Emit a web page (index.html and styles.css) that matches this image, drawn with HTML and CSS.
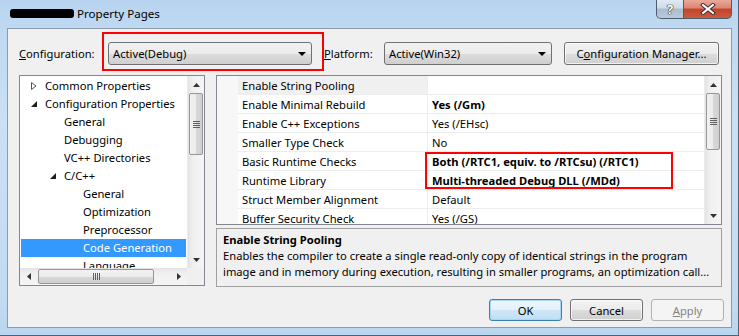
FILE: index.html
```html
<!DOCTYPE html>
<html>
<head>
<meta charset="utf-8">
<title>Property Pages</title>
<link rel="stylesheet" href="styles.css">
</head>
<body>
<div class="window">
  <div class="titlebar">
    <span class="redact"></span><span class="title">Property Pages</span>
    <div class="caption">
      <div class="cap help">?</div>
      <div class="cap close">
        <svg width="16" height="12" viewBox="0 0 16 12"><path d="M3 2 L13 10 M13 2 L3 10" stroke="#3a2a2a" stroke-width="4" stroke-linecap="square"/><path d="M3 2 L13 10 M13 2 L3 10" stroke="#fff" stroke-width="2" stroke-linecap="square"/></svg>
      </div>
    </div>
  </div>
  <div class="client">
    <div class="toprow">
      <span class="lbl lbl-cfg"><u>C</u>onfiguration:</span>
      <div class="combo combo-cfg"><span>Active(Debug)</span><i class="drop"></i></div>
      <span class="lbl lbl-plat"><u>P</u>latform:</span>
      <div class="combo combo-plat"><span>Active(Win32)</span><i class="drop"></i></div>
      <div class="btn btn-mgr">C<u>o</u>nfiguration Manager...</div>
    </div>
    <div class="main">
      <div class="tree">
        <div class="tree-list">
          <div class="node d0"><span class="exp"><svg width="6" height="8" viewBox="0 0 6 8"><path d="M0.5 0.5 L5 4 L0.5 7.5 Z" fill="#fff" stroke="#555" stroke-width="1"/></svg></span>Common Properties</div>
          <div class="node d0"><span class="exp"><svg width="6" height="6" viewBox="0 0 6 6"><path d="M6 0 L6 6 L0 6 Z" fill="#1e1e1e"/></svg></span>Configuration Properties</div>
          <div class="node d1"><span class="exp"></span>General</div>
          <div class="node d1"><span class="exp"></span>Debugging</div>
          <div class="node d1"><span class="exp"></span>VC++ Directories</div>
          <div class="node d1"><span class="exp"><svg width="6" height="6" viewBox="0 0 6 6"><path d="M6 0 L6 6 L0 6 Z" fill="#1e1e1e"/></svg></span>C/C++</div>
          <div class="node d2"><span class="exp"></span>General</div>
          <div class="node d2"><span class="exp"></span>Optimization</div>
          <div class="node d2"><span class="exp"></span>Preprocessor</div>
          <div class="node d2 sel"><span class="exp"></span>Code Generation</div>
          <div class="node d2"><span class="exp"></span>Language</div>
        </div>
        <div class="vscroll">
          <div class="arr"><svg width="7" height="4" viewBox="0 0 7 4"><path d="M0 4 L3.5 0 L7 4 Z" fill="#333"/></svg></div>
          <div class="track"><div class="thumb v t-tree"><i class="grip-v"></i></div></div>
          <div class="arr"><svg width="7" height="4" viewBox="0 0 7 4"><path d="M0 0 L3.5 4 L7 0 Z" fill="#333"/></svg></div>
        </div>
        <div class="hscroll">
          <div class="arr"><svg width="4" height="7" viewBox="0 0 4 7"><path d="M4 0 L0 3.5 L4 7 Z" fill="#333"/></svg></div>
          <div class="track h"><div class="thumb hz"><i class="grip-h"></i></div></div>
          <div class="arr"><svg width="4" height="7" viewBox="0 0 4 7"><path d="M0 0 L4 3.5 L0 7 Z" fill="#333"/></svg></div>
        </div>
        <div class="corner"></div>
      </div>
      <div class="right">
        <div class="grid">
          <div class="rows">
            <div class="row first"><span class="gut"></span><span class="name">Enable String Pooling</span><span class="val"></span></div>
            <div class="row"><span class="gut"></span><span class="name">Enable Minimal Rebuild</span><span class="val b">Yes (/Gm)</span></div>
            <div class="row"><span class="gut"></span><span class="name">Enable C++ Exceptions</span><span class="val">Yes (/EHsc)</span></div>
            <div class="row"><span class="gut"></span><span class="name">Smaller Type Check</span><span class="val">No</span></div>
            <div class="row"><span class="gut"></span><span class="name">Basic Runtime Checks</span><span class="val b">Both (/RTC1, equiv. to /RTCsu) (/RTC1)</span></div>
            <div class="row"><span class="gut"></span><span class="name">Runtime Library</span><span class="val b">Multi-threaded Debug DLL (/MDd)</span></div>
            <div class="row"><span class="gut"></span><span class="name">Struct Member Alignment</span><span class="val">Default</span></div>
            <div class="row"><span class="gut"></span><span class="name">Buffer Security Check</span><span class="val">Yes (/GS)</span></div>
          </div>
          <div class="vscroll">
            <div class="arr"><svg width="7" height="4" viewBox="0 0 7 4"><path d="M0 4 L3.5 0 L7 4 Z" fill="#333"/></svg></div>
            <div class="track"><div class="thumb v t-grid"><i class="grip-v"></i></div></div>
            <div class="arr"><svg width="7" height="4" viewBox="0 0 7 4"><path d="M0 0 L3.5 4 L7 0 Z" fill="#333"/></svg></div>
          </div>
        </div>
        <div class="desc">
          <div class="desc-title">Enable String Pooling</div>
          <div class="desc-line">Enables the compiler to create a single read-only copy of identical strings in the program</div>
          <div class="desc-line">image and in memory during execution, resulting in smaller programs, an optimization call...</div>
        </div>
      </div>
    </div>
    <div class="buttons">
      <div class="btn btn-dlg default">OK</div>
      <div class="btn btn-dlg">Cancel</div>
      <div class="btn btn-dlg disabled"><u>A</u>pply</div>
    </div>
  </div>
</div>
<div class="mark mark-cfg"></div>
<div class="mark mark-rt"></div>
</body>
</html>
```

FILE: styles.css
```css
* { box-sizing: border-box; margin: 0; padding: 0; }
html, body { width: 739px; height: 336px; overflow: hidden; }
body {
  position: relative;
  font-family: "Noto Sans", "Segoe UI", sans-serif;
  font-size: 11.2px;
  color: #000;
  background: #fff;
}
u { text-decoration: underline; text-underline-offset: 1px; }

.window {
  width: 739px;
  height: 336px;
  display: flex;
  flex-direction: column;
  background: linear-gradient(180deg, #b7d3ef 0, #bfd9f2 28px, #c9e0f5 120px, #c3dbf2 300px, #b9d4ee 336px);
  border-right: 1px solid #4f6275;
  border-bottom: 1px solid #4f6275;
}

/* title bar */
.titlebar {
  height: 28px;
  flex: none;
  display: flex;
  align-items: flex-start;
  padding-left: 10px;
}
.redact {
  width: 64px;
  height: 9px;
  margin-top: 9px;
  background: #000;
  border-radius: 3px;
}
.title {
  margin-left: 3px;
  line-height: 28px;
  font-size: 11.6px;
  color: #000;
}
.caption {
  margin-left: auto;
  margin-right: 6px;
  display: flex;
  height: 19px;
}
.cap {
  height: 19px;
  border: 1px solid #4d5d70;
  border-top: none;
  display: flex;
  align-items: center;
  justify-content: center;
}
.help {
  width: 28px;
  border-radius: 0 0 0 5px;
  background: linear-gradient(180deg, #e1eaf3 0, #cfdbe8 45%, #aabccf 50%, #b9cadb 100%);
  color: #fff;
  font-weight: bold;
  font-size: 13px;
  text-shadow: 0 0 1px #222, 0 0 1px #222, 0 0 1px #222;
}
.close {
  width: 48px;
  border-left: none;
  border-radius: 0 0 5px 0;
  background: linear-gradient(180deg, #e9a99a 0, #d98670 45%, #c2432c 50%, #cc5b3f 100%);
}

/* client */
.client {
  margin-left: 7px;
  width: 725px;
  height: 300px;
  flex: none;
  background: #f0f0f0;
  border: 1px solid #8e9bab;
  display: flex;
  flex-direction: column;
}
.toprow {
  display: flex;
  align-items: center;
  margin-top: 13px;
  height: 23px;
  padding-left: 11px;
}
.lbl-cfg { width: 89px; }
.lbl-plat { width: 60px; margin-left: 12px; }
.combo {
  height: 23px;
  display: flex;
  align-items: center;
  padding-left: 4px;
  border: 1px solid #707070;
  border-radius: 3px;
  background: linear-gradient(180deg, #f2f2f2 0, #ebebeb 50%, #dddddd 51%, #cfcfcf 100%);
}
.combo-cfg { width: 204px; }
.combo-plat { width: 168px; }
.drop {
  margin-left: auto;
  margin-right: 5px;
  width: 0;
  height: 0;
  border-left: 4px solid transparent;
  border-right: 4px solid transparent;
  border-top: 4px solid #000;
}
.btn {
  height: 23px;
  display: flex;
  align-items: center;
  justify-content: center;
  border: 1px solid #707070;
  border-radius: 3px;
  background: linear-gradient(180deg, #f2f2f2 0, #ebebeb 50%, #dddddd 51%, #cfcfcf 100%);
  box-shadow: inset 0 0 0 1px rgba(255,255,255,0.7);
}
.btn-mgr { width: 155px; margin-left: 12px; }

/* main */
.main {
  display: flex;
  margin-top: 10px;
  height: 212px;
  padding-left: 11px;
}
.tree {
  width: 186px;
  height: 211px;
  border: 1px solid #828790;
  background: #fff;
  display: grid;
  grid-template-columns: 1fr 17px;
  grid-template-rows: 1fr 17px;
}
.tree-list {
  padding: 1px 1px 0;
  overflow: hidden;
}
.node {
  height: 18px;
  line-height: 18px;
  display: flex;
  align-items: center;
  white-space: nowrap;
}
.exp {
  width: 19px;
  height: 18px;
  flex: none;
  display: flex;
  align-items: center;
  padding-left: 5px;
}
.d0 { padding-left: 5px; }
.d1 { padding-left: 24px; }
.d2 { padding-left: 43px; }
.sel { background: #3399ff; color: #fff; }

.vscroll {
  display: flex;
  flex-direction: column;
  background: linear-gradient(90deg, #e3e3e3 0, #f0f0f0 30%, #f5f5f5 100%);
  border-left: 1px solid #ececec;
}
.vscroll .arr, .hscroll .arr {
  flex: none;
  width: 17px;
  height: 17px;
  display: flex;
  align-items: center;
  justify-content: center;
}
.track { flex: 1; display: flex; flex-direction: column; }
.track.h { flex-direction: row; }
.thumb {
  border: 1px solid #979797;
  border-radius: 2px;
  display: flex;
  align-items: center;
  justify-content: center;
}
.thumb.v {
  margin: 0 1px;
  background: linear-gradient(90deg, #f2f2f2 0, #ebebeb 50%, #d9d9d9 51%, #cfcfcf 100%);
}
.t-tree { margin-top: 2px; height: 62px; }
.t-grid { margin-top: 2px; height: 57px; }
.grip-v {
  width: 7px;
  height: 7px;
  background: repeating-linear-gradient(180deg, #606060 0, #606060 1px, transparent 1px, transparent 2px);
}
.hscroll {
  display: flex;
  background: linear-gradient(180deg, #e3e3e3 0, #f0f0f0 30%, #f5f5f5 100%);
}
.thumb.hz {
  margin: 1px 0 1px 1px;
  width: 116px;
  background: linear-gradient(180deg, #f2f2f2 0, #ebebeb 50%, #d9d9d9 51%, #cfcfcf 100%);
}
.grip-h {
  width: 7px;
  height: 7px;
  background: repeating-linear-gradient(90deg, #606060 0, #606060 1px, transparent 1px, transparent 2px);
}
.corner { background: #f0f0f0; }

/* right */
.right {
  margin-left: 11px;
  width: 506px;
  display: flex;
  flex-direction: column;
}
.grid {
  height: 150px;
  border: 1px solid #828790;
  background: #fff;
  display: flex;
}
.rows { flex: 1; overflow: hidden; }
.row {
  display: flex;
  height: 19px;
  line-height: 19px;
  white-space: nowrap;
}
.gut { width: 21px; flex: none; background: #f7f7f7; }
.name {
  width: 190px;
  flex: none;
  padding-left: 4px;
  border-bottom: 1px solid #ededed;
  border-right: 1px solid #ededed;
}
.val {
  flex: 1;
  padding-left: 4px;
  border-bottom: 1px solid #ededed;
}
.first .name { background: #f0f0f0; }
.b { font-weight: bold; }
.grid .vscroll { width: 17px; flex: none; }

.desc {
  margin-top: 3px;
  height: 59px;
  border: 1px solid #a0a0a0;
  background: #f0f0f0;
  padding: 3px 0 0 6px;
  line-height: 16px;
  white-space: nowrap;
  overflow: hidden;
}
.desc-title { font-weight: bold; }

/* buttons */
.buttons {
  display: flex;
  justify-content: flex-end;
  gap: 8px;
  margin-top: 12px;
  padding-right: 7px;
}
.btn-dlg { width: 73px; height: 22px; }
.default {
  border-color: #3c7fb1;
  background: linear-gradient(180deg, #eef7fd 0, #e3f1fb 50%, #cfe7f8 51%, #bfdff5 100%);
  box-shadow: inset 0 0 0 1px #a6d8f5;
}
.disabled {
  border-color: #adb2b5;
  background: #f4f4f4;
  color: #838383;
  box-shadow: none;
}

/* red annotation boxes */
.mark {
  position: absolute;
  border: 2px solid #ff0000;
}
.mark-cfg { left: 102px; top: 32px; width: 222px; height: 39px; }
.mark-rt { left: 425px; top: 152px; width: 248px; height: 37px; }
```
